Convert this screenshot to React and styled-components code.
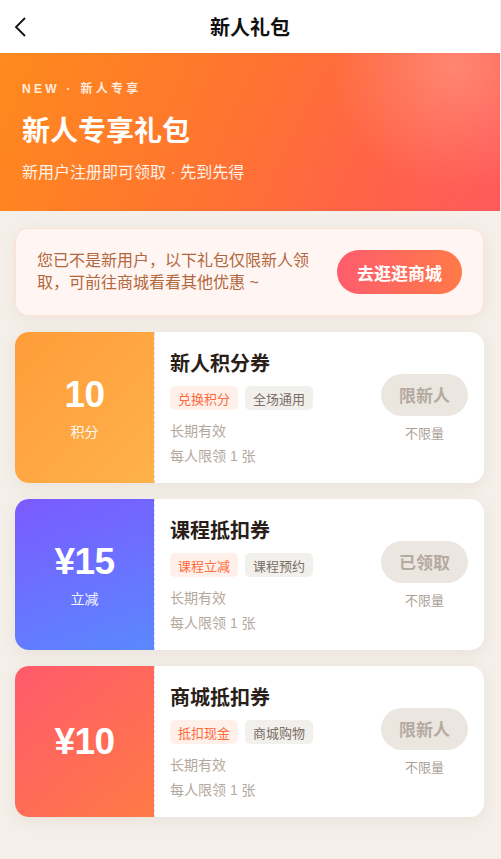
import styled, { createGlobalStyle } from "styled-components";

const GlobalStyle = createGlobalStyle`
  * {
    box-sizing: border-box;
  }
  body {
    margin: 0;
    background: #f4efe9;
    font-family: "Liberation Sans", "Noto Sans CJK SC", sans-serif;
  }
`;

const Page = styled.div`
  width: 500px;
  min-height: 859px;
  background: #f4efe9;
`;

const NavBar = styled.div`
  height: 53px;
  background: #fff;
  display: flex;
  align-items: center;
  justify-content: center;
  position: relative;
`;

const BackButton = styled.div`
  position: absolute;
  left: 12px;
  top: 15px;
  width: 20px;
  height: 24px;
  display: flex;
`;

const NavTitle = styled.div`
  font-size: 20px;
  font-weight: 700;
  color: #111;
`;

const Banner = styled.div`
  padding: 28px 22px 27px;
  color: #fff;
  background: radial-gradient(circle at 91% 8%, rgba(255, 170, 150, 0.5), rgba(255, 170, 150, 0) 26%),
    linear-gradient(115deg, #ff8a1c 0%, #ff7430 45%, #ff6348 75%, #ff5a5c 100%);
`;

const Eyebrow = styled.div`
  font-size: 12px;
  line-height: 16px;
  font-weight: 700;
  letter-spacing: 3.3px;
  opacity: 0.85;
`;

const BannerTitle = styled.div`
  margin-top: 17px;
  font-size: 28px;
  line-height: 36px;
  font-weight: 700;
`;

const BannerSub = styled.div`
  margin-top: 12px;
  font-size: 16px;
  line-height: 22px;
  opacity: 0.9;
`;

const Content = styled.div`
  padding: 17px 16px 30px 15px;
  display: flex;
  flex-direction: column;
  gap: 16px;
`;

const Notice = styled.div`
  display: flex;
  align-items: center;
  justify-content: space-between;
  gap: 22px;
  padding: 21px 21px 21px;
  background: #fff6f3;
  border: 1px solid #fde1d5;
  border-radius: 13px;
  box-shadow: 0 4px 16px rgba(150, 110, 70, 0.08);
`;

const NoticeText = styled.div`
  font-size: 16px;
  line-height: 22px;
  color: #b3673c;
`;

const ShopButton = styled.div`
  flex-shrink: 0;
  width: 125px;
  height: 44px;
  border-radius: 22px;
  display: flex;
  align-items: center;
  justify-content: center;
  font-size: 17px;
  font-weight: 700;
  color: #fff;
  background: linear-gradient(90deg, #ff5c6d, #ff7a48);
`;

const Card = styled.div`
  display: flex;
  min-height: 151px;
  border-radius: 14px;
  overflow: hidden;
  background: #fff;
  box-shadow: 0 4px 16px rgba(120, 90, 60, 0.08);
`;

const Value = styled.div`
  width: 139px;
  flex-shrink: 0;
  display: flex;
  flex-direction: column;
  align-items: center;
  justify-content: center;
  color: #fff;
  background: ${(p) => p.bg};
`;

const Amount = styled.div`
  font-size: 37px;
  line-height: 42px;
  font-weight: 900;
  letter-spacing: -0.5px;
`;

const Unit = styled.div`
  margin-top: 6px;
  font-size: 14px;
  line-height: 20px;
  opacity: 0.95;
`;

const Body = styled.div`
  flex: 1;
  display: flex;
  align-items: center;
  padding: 17px 16px 16px 15px;
  border-left: 1px dashed #e4d9ee;
`;

const Info = styled.div`
  flex: 1;
`;

const CardTitle = styled.div`
  font-size: 20px;
  line-height: 28px;
  font-weight: 700;
  color: #2a1e18;
`;

const Tags = styled.div`
  display: flex;
  gap: 7px;
  margin-top: 8px;
`;

const Tag = styled.span`
  height: 24px;
  padding: 0 8px;
  border-radius: 5px;
  display: flex;
  align-items: center;
  font-size: 13px;
  color: ${(p) => (p.hot ? "#ff6a3d" : "#7a6e66")};
  background: ${(p) => (p.hot ? "#fff0e9" : "#f2f0ec")};
`;

const Meta = styled.div`
  font-size: 14px;
  line-height: 20px;
  color: #b3a89e;
  margin-top: ${(p) => p.gap || 5}px;
`;

const Action = styled.div`
  display: flex;
  flex-direction: column;
  align-items: center;
  gap: 9px;
`;

const Pill = styled.div`
  width: 87px;
  height: 42px;
  border-radius: 21px;
  background: #ebe6e0;
  color: #b5aaa0;
  font-size: 17px;
  font-weight: 700;
  display: flex;
  align-items: center;
  justify-content: center;
`;

const Limit = styled.div`
  font-size: 13px;
  line-height: 18px;
  color: #aaa097;
`;

const coupons = [
  {
    amount: "10",
    unit: "积分",
    bg: "linear-gradient(135deg, #ff9c3a 0%, #ffb24a 100%)",
    title: "新人积分券",
    tags: ["兑换积分", "全场通用"],
    action: "限新人",
  },
  {
    amount: "¥15",
    unit: "立减",
    bg: "linear-gradient(160deg, #7b5aff 0%, #5a88ff 100%)",
    title: "课程抵扣券",
    tags: ["课程立减", "课程预约"],
    action: "已领取",
  },
  {
    amount: "¥10",
    bg: "linear-gradient(140deg, #ff5a6c 0%, #ff7a45 100%)",
    title: "商城抵扣券",
    tags: ["抵扣现金", "商城购物"],
    action: "限新人",
  },
];

const App = () => {
  return (
    <Page>
      <GlobalStyle />
      <NavBar>
        <BackButton>
          <svg width="20" height="24" viewBox="0 0 20 24" fill="none">
            <polyline points="13,3 4,12 13,21" stroke="#111" strokeWidth="1.8" />
          </svg>
        </BackButton>
        <NavTitle>新人礼包</NavTitle>
      </NavBar>

      <Banner>
        <Eyebrow>NEW · 新人专享</Eyebrow>
        <BannerTitle>新人专享礼包</BannerTitle>
        <BannerSub>新用户注册即可领取 · 先到先得</BannerSub>
      </Banner>

      <Content>
        <Notice>
          <NoticeText>您已不是新用户，以下礼包仅限新人领取，可前往商城看看其他优惠 ~</NoticeText>
          <ShopButton>去逛逛商城</ShopButton>
        </Notice>

        {coupons.map((c) => (
          <Card key={c.title}>
            <Value bg={c.bg}>
              <Amount>{c.amount}</Amount>
              {c.unit && <Unit>{c.unit}</Unit>}
            </Value>
            <Body>
              <Info>
                <CardTitle>{c.title}</CardTitle>
                <Tags>
                  <Tag hot>{c.tags[0]}</Tag>
                  <Tag>{c.tags[1]}</Tag>
                </Tags>
                <Meta gap={11}>长期有效</Meta>
                <Meta>每人限领 1 张</Meta>
              </Info>
              <Action>
                <Pill>{c.action}</Pill>
                <Limit>不限量</Limit>
              </Action>
            </Body>
          </Card>
        ))}
      </Content>
    </Page>
  );
};

export default App;
